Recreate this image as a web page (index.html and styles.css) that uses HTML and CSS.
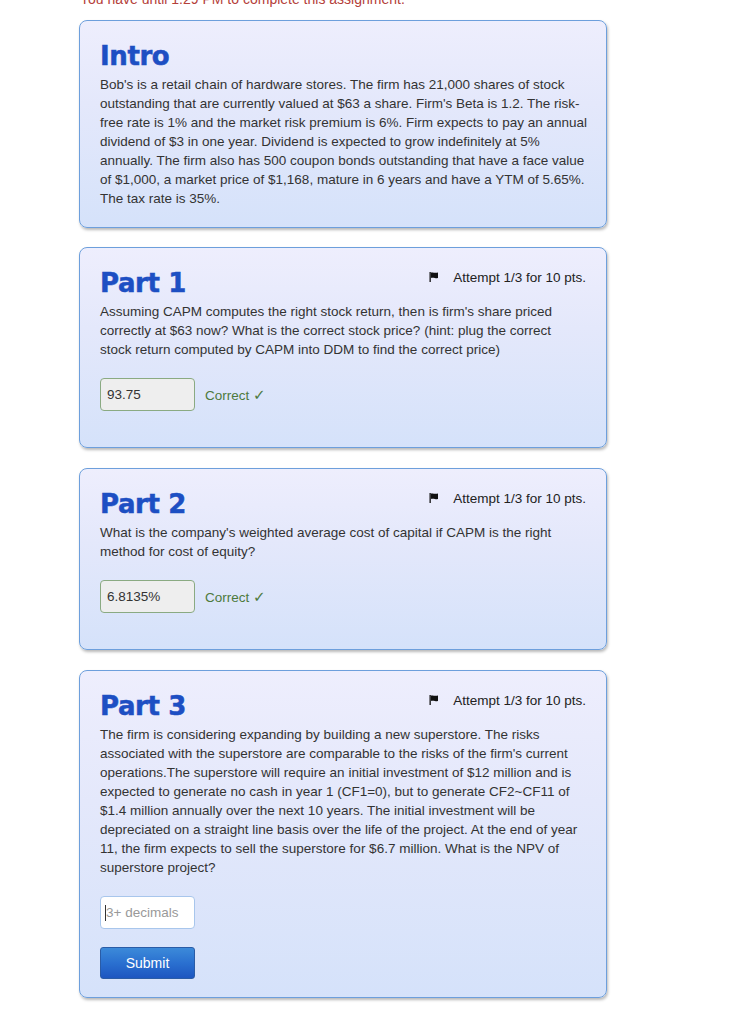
FILE: index.html
```html
<!DOCTYPE html>
<html lang="en">
<head>
<meta charset="utf-8">
<title>Assignment</title>
<link rel="stylesheet" href="styles.css">
</head>
<body>
<div class="page">
  <p class="deadline">You have until 1:29 PM to complete this assignment.</p>

  <section class="card intro">
    <h2 class="card-title">Intro</h2>
    <p class="card-text">Bob's is a retail chain of hardware stores. The firm has 21,000 shares of stock<br>outstanding that are currently valued at $63 a share. Firm's Beta is 1.2. The risk-<br>free rate is 1% and the market risk premium is 6%. Firm expects to pay an annual<br>dividend of $3 in one year. Dividend is expected to grow indefinitely at 5%<br>annually. The firm also has 500 coupon bonds outstanding that have a face value<br>of $1,000, a market price of $1,168, mature in 6 years and have a YTM of 5.65%.<br>The tax rate is 35%.</p>
  </section>

  <section class="card part">
    <div class="card-head">
      <h2 class="card-title">Part 1</h2>
      <div class="attempt"><svg class="flag" viewBox="0 0 10 10" width="10" height="10"><rect x="0.5" y="0" width="1.3" height="10" fill="#111"/><path d="M2 0.6 C4 0 5.5 1.4 9 0.6 L9 6 C5.5 6.8 4 5.4 2 6 Z" fill="#111"/></svg><span>Attempt 1/3 for 10 pts.</span></div>
    </div>
    <p class="card-text">Assuming CAPM computes the right stock return, then is firm's share priced<br>correctly at $63 now? What is the correct stock price? (hint: plug the correct<br>stock return computed by CAPM into DDM to find the correct price)</p>
    <div class="field-row">
      <div class="field field-correct">93.75</div>
      <span class="status">Correct <span class="check">✓</span></span>
    </div>
  </section>

  <section class="card part">
    <div class="card-head">
      <h2 class="card-title">Part 2</h2>
      <div class="attempt"><svg class="flag" viewBox="0 0 10 10" width="10" height="10"><rect x="0.5" y="0" width="1.3" height="10" fill="#111"/><path d="M2 0.6 C4 0 5.5 1.4 9 0.6 L9 6 C5.5 6.8 4 5.4 2 6 Z" fill="#111"/></svg><span>Attempt 1/3 for 10 pts.</span></div>
    </div>
    <p class="card-text">What is the company's weighted average cost of capital if CAPM is the right<br>method for cost of equity?</p>
    <div class="field-row">
      <div class="field field-correct">6.8135%</div>
      <span class="status">Correct <span class="check">✓</span></span>
    </div>
  </section>

  <section class="card part">
    <div class="card-head">
      <h2 class="card-title">Part 3</h2>
      <div class="attempt"><svg class="flag" viewBox="0 0 10 10" width="10" height="10"><rect x="0.5" y="0" width="1.3" height="10" fill="#111"/><path d="M2 0.6 C4 0 5.5 1.4 9 0.6 L9 6 C5.5 6.8 4 5.4 2 6 Z" fill="#111"/></svg><span>Attempt 1/3 for 10 pts.</span></div>
    </div>
    <p class="card-text">The firm is considering expanding by building a new superstore. The risks<br>associated with the superstore are comparable to the risks of the firm's current<br>operations.The superstore will require an initial investment of $12 million and is<br>expected to generate no cash in year 1 (CF1=0), but to generate CF2~CF11 of<br>$1.4 million annually over the next 10 years. The initial investment will be<br>depreciated on a straight line basis over the life of the project. At the end of year<br>11, the firm expects to sell the superstore for $6.7 million. What is the NPV of<br>superstore project?</p>
    <div class="field-row">
      <div class="field field-empty"><span class="caret"></span><span class="placeholder">3+ decimals</span></div>
    </div>
    <button class="submit" type="button">Submit</button>
  </section>
</div>
</body>
</html>
```

FILE: styles.css
```css
html, body {
  margin: 0;
  padding: 0;
  background: #ffffff;
}

body {
  font-family: "Liberation Sans", Arial, sans-serif;
  color: #333333;
  overflow: hidden;
}

.page {
  width: 528px;
  margin-left: 79px;
}

.deadline {
  margin: -10px 0 0 1px;
  height: 29px;
  font-size: 14px;
  line-height: 18px;
  color: #b4403a;
  white-space: nowrap;
}

.card {
  border: 1px solid #6d9fdc;
  border-radius: 8px;
  background: linear-gradient(to bottom, #eeeefd 0%, #e4e8fb 40%, #d5e2fa 100%);
  box-shadow: 1px 2px 3px rgba(0, 0, 0, 0.28);
  padding: 20px 20px 18px 20px;
  margin-bottom: 20px;
}

.intro {
  padding-bottom: 19px;
  margin-bottom: 19px;
  margin-top: 1px;
}

.card-head {
  display: flex;
  justify-content: space-between;
  align-items: flex-start;
}

.card-title {
  margin: 0 0 4px 0;
  font-family: "DejaVu Sans", Verdana, sans-serif;
  font-weight: bold;
  font-size: 26px;
  line-height: 30px;
  color: #1d4fc3;
  letter-spacing: -0.4px;
  -webkit-text-stroke: 0.5px #1d4fc3;
}

.attempt {
  display: flex;
  align-items: center;
  font-size: 13.5px;
  line-height: 19px;
  color: #222222;
}

.flag {
  margin-right: 14px;
  margin-top: -2px;
}

.card-text {
  margin: 0;
  font-size: 13.5px;
  line-height: 19px;
  color: #333333;
  white-space: nowrap;
}

.field-row {
  display: flex;
  align-items: center;
  margin-top: 19px;
  margin-bottom: 18px;
}

.field {
  box-sizing: border-box;
  width: 95px;
  height: 33px;
  border-radius: 4px;
  padding: 0 6px;
  font-size: 13.5px;
  line-height: 31px;
  display: flex;
  align-items: center;
}

.field-correct {
  background: #eeeeee;
  border: 1px solid #8aaa82;
  color: #333333;
}

.field-empty {
  background: #ffffff;
  border: 1px solid #a8c6ec;
  padding-left: 4px;
}

.caret {
  display: inline-block;
  width: 1px;
  height: 16px;
  background: #333333;
}

.placeholder {
  color: #999999;
}

.status {
  margin-left: 10px;
  font-size: 13.5px;
  color: #4d7a3d;
}

.check {
  font-size: 15px;
  font-family: "DejaVu Sans", sans-serif;
}

.submit {
  display: block;
  box-sizing: border-box;
  width: 95px;
  height: 32px;
  margin-top: 3px;
  border: 1px solid #2a5ca6;
  border-radius: 3px;
  background: linear-gradient(to bottom, #3c8ad9 0%, #2a70d0 50%, #1d56c0 100%);
  color: #ffffff;
  font-family: "Liberation Sans", Arial, sans-serif;
  font-size: 14px;
  padding: 0;
  cursor: pointer;
}
```
